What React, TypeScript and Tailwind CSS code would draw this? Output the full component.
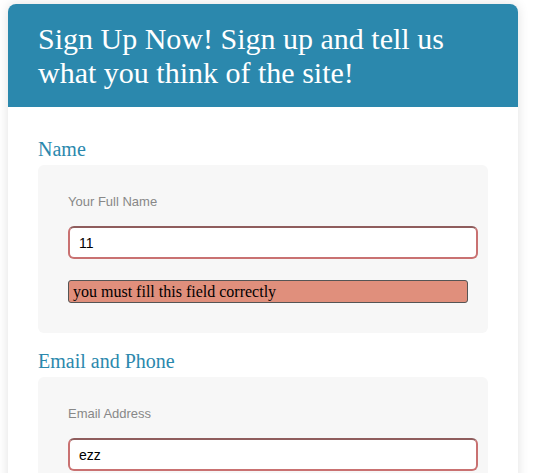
export default function App() {
  return (
    <div className="min-h-screen bg-white pt-1 pl-2" style={{ fontFamily: '"Liberation Serif", serif' }}>
      <div className="w-[510px] rounded-t-lg bg-white shadow-[0_0_12px_rgba(0,0,0,0.12)]">
        <div className="rounded-t-lg bg-[#2b88ad] px-[30px] pt-[18px] pb-[17px]">
          <h1 className="text-[30px] leading-[34px] text-white">
            Sign Up Now! Sign up and tell us what you think of the site!
          </h1>
        </div>

        <div className="px-[30px] pt-[30px]">
          <h2 className="text-[20px] leading-[24px] text-[#2b88ad]">Name</h2>
          <div className="mt-[4px] rounded-md bg-[#f7f7f7] px-[30px] pt-[29px] pb-[30px]">
            <label
              className="block text-[13px] leading-[15px] text-[#888]"
              style={{ fontFamily: '"Liberation Sans", Arial, sans-serif' }}
            >
              Your Full Name
            </label>
            <input
              defaultValue="11"
              className="mt-[17px] block h-[33px] w-[410px] rounded-md border-2 border-[#c97171] border-t-[#8f5d5d] bg-white px-[9px] text-[14px] text-black outline-none"
              style={{ fontFamily: '"Liberation Sans", Arial, sans-serif' }}
            />
            <div className="mt-[21px] h-[23px] w-[400px] rounded-[3px] border border-[#555] bg-[#e08f7c] px-[4px] text-[16px] leading-[21px] text-black">
              you must fill this field correctly
            </div>
          </div>

          <h2 className="mt-[16px] text-[20px] leading-[24px] text-[#2b88ad]">Email and Phone</h2>
          <div className="mt-[4px] rounded-md bg-[#f7f7f7] px-[30px] pt-[29px] pb-[30px]">
            <label
              className="block text-[13px] leading-[15px] text-[#888]"
              style={{ fontFamily: '"Liberation Sans", Arial, sans-serif' }}
            >
              Email Address
            </label>
            <input
              defaultValue="ezz"
              className="mt-[17px] block h-[33px] w-[410px] rounded-md border-2 border-[#c97171] border-t-[#8f5d5d] bg-white px-[9px] text-[14px] text-black outline-none"
              style={{ fontFamily: '"Liberation Sans", Arial, sans-serif' }}
            />
          </div>
        </div>
      </div>
    </div>
  );
}
